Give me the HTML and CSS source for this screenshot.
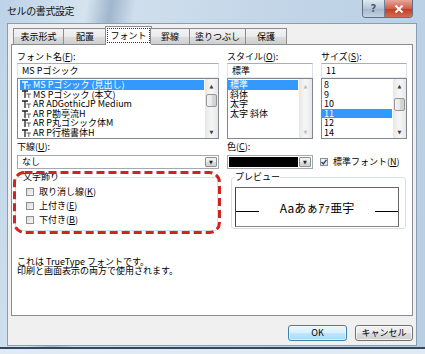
FILE: index.html
```html
<!DOCTYPE html>
<html lang="ja">
  <head>
    <meta charset="utf-8" />
    <title>セルの書式設定</title>
    <link rel="stylesheet" href="styles.css">
  </head>

  <body>
    <div class="window">
      <div class="titlebar">
        <span class="title">セルの書式設定</span>
        <div class="caption-buttons">
          <span class="cap-help">?</span>
          <span class="cap-close">
            <svg width="10" height="8" viewBox="0 0 10 8">
              <path d="M1.5 0.5L8.5 7.5M8.5 0.5L1.5 7.5" stroke="#fff" stroke-width="2" />
            </svg>
          </span>
        </div>
      </div>

      <div class="client">
        <div class="tabs">
          <span class="tab tab-w1">表示形式</span>
          <span class="tab tab-w2">配置</span>
          <span class="tab tab-active"><span class="focus">フォント</span></span>
          <span class="tab tab-w4">罫線</span>
          <span class="tab tab-w5">塗りつぶし</span>
          <span class="tab tab-w6">保護</span>
        </div>

        <div class="panel">
          <div class="font-grid">
            <label class="lbl">フォント名(<u>F</u>):</label>
            <label class="lbl">スタイル(<u>O</u>):</label>
            <label class="lbl">サイズ(<u>S</u>):</label>

            <div class="textbox">MS Pゴシック</div>
            <div class="textbox">標準</div>
            <div class="textbox">11</div>

            <div class="listbox">
              <ul class="items font-items">
                <li class="selected"><svg class="tt" width="10" height="8" viewBox="0 0 10 8"><path d="M0 1h6M3 1v7" stroke="currentColor" stroke-width="1.3" /><path d="M4.5 4h4.5M6.8 4v4" stroke="currentColor" stroke-width="1" opacity="0.7" /></svg>MS Pゴシック (見出し)</li>
                <li><svg class="tt" width="10" height="8" viewBox="0 0 10 8"><path d="M0 1h6M3 1v7" stroke="currentColor" stroke-width="1.3" /><path d="M4.5 4h4.5M6.8 4v4" stroke="currentColor" stroke-width="1" opacity="0.7" /></svg>MS Pゴシック (本文)</li>
                <li><svg class="tt" width="10" height="8" viewBox="0 0 10 8"><path d="M0 1h6M3 1v7" stroke="currentColor" stroke-width="1.3" /><path d="M4.5 4h4.5M6.8 4v4" stroke="currentColor" stroke-width="1" opacity="0.7" /></svg>AR ADGothicJP Medium</li>
                <li><svg class="tt" width="10" height="8" viewBox="0 0 10 8"><path d="M0 1h6M3 1v7" stroke="currentColor" stroke-width="1.3" /><path d="M4.5 4h4.5M6.8 4v4" stroke="currentColor" stroke-width="1" opacity="0.7" /></svg>AR P勘亭流H</li>
                <li><svg class="tt" width="10" height="8" viewBox="0 0 10 8"><path d="M0 1h6M3 1v7" stroke="currentColor" stroke-width="1.3" /><path d="M4.5 4h4.5M6.8 4v4" stroke="currentColor" stroke-width="1" opacity="0.7" /></svg>AR P丸ゴシック体M</li>
                <li><svg class="tt" width="10" height="8" viewBox="0 0 10 8"><path d="M0 1h6M3 1v7" stroke="currentColor" stroke-width="1.3" /><path d="M4.5 4h4.5M6.8 4v4" stroke="currentColor" stroke-width="1" opacity="0.7" /></svg>AR P行楷書体H</li>
              </ul>
              <div class="scrollbar">
                <span class="arrow">▲</span>
                <span class="track"><span class="thumb thumb-font"></span></span>
                <span class="arrow">▼</span>
              </div>
            </div>

            <div class="listbox">
              <ul class="items style-items">
                <li class="selected">標準</li>
                <li>斜体</li>
                <li>太字</li>
                <li>太字 斜体</li>
              </ul>
              <div class="scrollbar disabled">
                <span class="arrow">▲</span>
                <span class="track"></span>
                <span class="arrow">▼</span>
              </div>
            </div>

            <div class="listbox">
              <ul class="items size-items">
                <li>8</li>
                <li>9</li>
                <li>10</li>
                <li class="selected">11</li>
                <li>12</li>
                <li>14</li>
              </ul>
              <div class="scrollbar">
                <span class="arrow">▲</span>
                <span class="track"><span class="thumb thumb-size"></span></span>
                <span class="arrow">▼</span>
              </div>
            </div>
          </div>

          <div class="attr-grid">
            <label class="lbl">下線(<u>U</u>):</label>
            <label class="lbl">色(<u>C</u>):</label>
            <span></span>

            <div class="dropdown">
              <span class="dd-text">なし</span>
              <span class="dd-button">▼</span>
            </div>
            <div class="dropdown">
              <span class="swatch"></span>
              <span class="dd-button">▼</span>
            </div>
            <div class="check-row">
              <span class="checkbox checked">
                <svg width="6" height="6" viewBox="0 0 6 6"><path d="M0.5 3L2.3 5L5.5 0.8" fill="none" stroke="#2b3d6b" stroke-width="1.3" /></svg>
              </span>
              <span>標準フォント(<u>N</u>)</span>
            </div>
          </div>

          <div class="groups">
            <div class="highlight">
              <fieldset class="group effects">
                <legend>文字飾り</legend>
                <div class="check-row"><span class="checkbox"></span><span>取り消し線(<u>K</u>)</span></div>
                <div class="check-row"><span class="checkbox"></span><span>上付き(<u>E</u>)</span></div>
                <div class="check-row"><span class="checkbox"></span><span>下付き(<u>B</u>)</span></div>
              </fieldset>
              <svg class="dashes" width="208" height="63" viewBox="0 0 208 63">
                <rect x="1.5" y="1.5" width="205" height="60" rx="10" fill="none" stroke="#cf2420" stroke-width="3" stroke-dasharray="8 4" />
              </svg>
            </div>

            <fieldset class="group preview">
              <legend>プレビュー</legend>
              <div class="preview-box">
                <span class="rule"></span>
                <span class="sample">Aaあぁｱｧ亜宇</span>
                <span class="rule"></span>
              </div>
            </fieldset>
          </div>

          <p class="info">これは TrueType フォントです。<br>印刷と画面表示の両方で使用されます。</p>
        </div>

        <div class="buttons">
          <button class="btn btn-default">OK</button>
          <button class="btn">キャンセル</button>
        </div>
      </div>
    </div>
  </body>
</html>
```

FILE: styles.css
```css
* {
  box-sizing: border-box;
}

body {
  margin: 0;
  background: #ffffff;
  font-family: "Noto Sans CJK JP", "Noto Sans", sans-serif;
  font-size: 9px;
  color: #000000;
}

u {
  text-decoration: underline;
  text-underline-offset: 1px;
}

/* window frame */

.window {
  width: 425px;
  height: 354px;
  display: flex;
  flex-direction: column;
  padding: 0 8px 8px 7px;
  background:
    linear-gradient(to top, #dfeaf4 0, #dfeaf4 5px, #33465c 5px, #33465c 7px, transparent 7px),
    linear-gradient(100deg, #bcd3e6 0, #d5e3ef 18%, #9fb6cc 23%, #cfdeec 28%, #c3d6e8 55%, #b7cee3 100%);
}

.titlebar {
  height: 23px;
  display: flex;
  justify-content: space-between;
  align-items: flex-start;
}

.title {
  padding-top: 5px;
  font-size: 10px;
  line-height: 12px;
  letter-spacing: -0.4px;
  color: #111111;
}

.caption-buttons {
  display: flex;
  margin-right: 4px;
  height: 18px;
  border: 1px solid #5d6f85;
  border-top: 0;
  border-radius: 0 0 4px 4px;
  overflow: hidden;
}

.cap-help {
  width: 22px;
  display: flex;
  align-items: center;
  justify-content: center;
  background: linear-gradient(#dfe8f1, #b5c6d8 50%, #a3b6ca 51%, #c2d2e2);
  border-right: 1px solid #6f8197;
  font-family: "DejaVu Sans", sans-serif;
  font-size: 10px;
  font-weight: bold;
  color: #4b5a6c;
}

.cap-close {
  width: 27px;
  display: flex;
  align-items: center;
  justify-content: center;
  background: linear-gradient(#e8a69a, #d0604b 50%, #c03c25 51%, #d66a4e);
}

.client {
  flex: 1;
  display: flex;
  flex-direction: column;
  padding: 2px 3px 4px 3px;
  background: #f0f0f0;
  border: 1px solid #8b9db2;
}

/* tabs */

.tabs {
  display: flex;
  align-items: flex-end;
  margin-left: 2px;
  position: relative;
  z-index: 1;
}

.tab {
  height: 16px;
  display: flex;
  align-items: center;
  justify-content: center;
  margin-left: -1px;
  border: 1px solid #898c95;
  border-bottom: 0;
  background: linear-gradient(#f2f2f2, #ebebeb 50%, #dddddd 51%, #cfcfcf);
  line-height: 10px;
}

.tab:first-child {
  margin-left: 0;
}

.tab-w1 { width: 51px; }
.tab-w2 { width: 44px; }
.tab-w4 { width: 40px; }
.tab-w5 { width: 57px; }
.tab-w6 { width: 42px; }

.tab-active {
  width: 47px;
  height: 19px;
  margin: 0 -1px -1px -2px;
  background: #ffffff;
  padding-bottom: 2px;
}

.tab-active .focus {
  padding: 2px 2px 1px;
  border: 1px dotted #333333;
}

/* tab page */

.panel {
  height: 272px;
  padding: 7px 6px 0 5px;
  background: #ffffff;
  border: 1px solid #898c95;
}

.lbl {
  display: block;
  height: 10px;
  line-height: 10px;
  white-space: nowrap;
}

.font-grid {
  display: grid;
  grid-template-columns: 202px 86px 86px;
  grid-template-rows: 11px 15px 61px;
  column-gap: 8px;
}

.textbox {
  align-self: end;
  height: 15px;
  padding-left: 4px;
  border: 1px solid #abadb3;
  border-left-color: #e2e3ea;
  border-right-color: #dbdfe6;
  border-bottom-color: #e3e9ef;
  line-height: 13px;
}

.listbox {
  display: flex;
  height: 61px;
  border: 1px solid #828790;
}

.items {
  flex: 1;
  margin: 0;
  padding: 1px 1px 0 0;
  list-style: none;
  overflow: hidden;
}

.items li {
  height: 9.6px;
  line-height: 9.6px;
  white-space: nowrap;
}

.items li.selected {
  background: #3399ff;
  color: #ffffff;
}

.font-items li {
  display: flex;
  align-items: center;
  margin-left: 2px;
  padding-left: 2px;
}

.font-items .tt {
  flex: none;
  margin-right: 1px;
  color: #222222;
}

.font-items li.selected .tt {
  color: #ffffff;
}

.style-items li,
.size-items li {
  padding-left: 2px;
}

.size-items li {
  margin-right: 0;
}

.scrollbar {
  width: 13px;
  display: flex;
  flex-direction: column;
  background: linear-gradient(90deg, #e6e6e6, #f4f4f4 40%, #f4f4f4 60%, #e6e6e6);
}

.scrollbar .arrow {
  height: 13px;
  display: flex;
  align-items: center;
  justify-content: center;
  font-family: "DejaVu Sans", sans-serif;
  font-size: 5px;
  color: #3c3c3c;
}

.scrollbar.disabled .arrow {
  color: #bfbfbf;
}

.scrollbar .track {
  flex: 1;
  display: flex;
  flex-direction: column;
}

.thumb {
  display: block;
  height: 13px;
  margin: 0 1px;
  border: 1px solid #979797;
  border-radius: 2px;
  background: linear-gradient(90deg, #f3f3f3, #e8e8e8 50%, #d9d9d9 51%, #cfcfcf);
}

.thumb-font {
  margin-top: 2px;
}

.thumb-size {
  margin-top: 6px;
}

/* underline / colour row */

.attr-grid {
  display: grid;
  grid-template-columns: 202px 86px 86px;
  grid-template-rows: 12px 15px;
  column-gap: 8px;
  margin-top: 3px;
}

.dropdown {
  align-self: end;
  height: 14px;
  display: flex;
  align-items: stretch;
  padding: 1px;
  border: 1px solid #a4a8b0;
  background: #ffffff;
}

.dd-text {
  flex: 1;
  padding-left: 3px;
  line-height: 10px;
}

.swatch {
  flex: 1;
  margin-right: 1px;
  background: #000000;
}

.dd-button {
  width: 12px;
  display: flex;
  align-items: center;
  justify-content: center;
  border: 1px solid #8e8f8f;
  border-radius: 1px;
  background: linear-gradient(#f2f2f2, #ebebeb 50%, #dddddd 51%, #cfcfcf);
  font-family: "DejaVu Sans", sans-serif;
  font-size: 5px;
  color: #222222;
}

.check-row {
  display: flex;
  align-items: center;
  gap: 5px;
  height: 14px;
  line-height: 10px;
  white-space: nowrap;
}

.attr-grid .check-row {
  align-self: end;
  margin-left: -1px;
}

.checkbox {
  width: 8px;
  height: 8px;
  flex: none;
  display: flex;
  align-items: center;
  justify-content: center;
  border: 1px solid #8f8f8f;
  background: linear-gradient(135deg, #dcdcdc, #f6f6f6);
}

.checkbox.checked {
  background: linear-gradient(135deg, #f1f4fa, #dce4f0);
}

/* groups */

.groups {
  display: flex;
  align-items: flex-start;
  margin-top: 3px;
}

.highlight {
  position: relative;
  margin-left: -2px;
}

.dashes {
  position: absolute;
  left: -2px;
  top: -1px;
}

.group {
  margin: 0;
  border: 1px solid #d5dfe5;
  border-radius: 3px;
}

.group legend {
  padding: 0 1px;
  line-height: 10px;
}

.effects {
  width: 203px;
  height: 59px;
  padding: 3px 6px 0 6px;
}

.effects .check-row {
  margin-left: 4px;
}

.preview {
  width: 176px;
  height: 57px;
  margin-left: 13px;
  padding: 0 6px 1px 3px;
}

.preview legend {
  padding: 0;
}

.preview-box {
  height: 40px;
  margin-top: 5px;
  display: grid;
  grid-template-columns: 23px 1fr 23px;
  align-items: end;
  padding-bottom: 12px;
  border: 1px solid #666666;
  border-left-color: #444444;
  border-bottom-color: #888888;
}

.rule {
  height: 1px;
  margin-bottom: 2px;
  background: #000000;
}

.sample {
  text-align: center;
  font-size: 12px;
  line-height: 12px;
}

.info {
  margin: 26px 0 0;
  line-height: 9px;
  white-space: nowrap;
}

/* dialog buttons */

.buttons {
  display: flex;
  justify-content: flex-end;
  gap: 8px;
  margin-top: 9px;
}

.btn {
  width: 58px;
  height: 16px;
  padding: 0;
  border: 1px solid #707070;
  border-radius: 3px;
  background: linear-gradient(#f2f2f2, #ebebeb 50%, #dddddd 51%, #cfcfcf);
  box-shadow: inset 0 0 0 1px rgba(255, 255, 255, 0.7);
  font-family: "Noto Sans CJK JP", "Noto Sans", sans-serif;
  font-size: 9px;
  line-height: 12px;
  color: #000000;
}

.btn-default {
  width: 59px;
  border-color: #3c7fb1;
  background: linear-gradient(#eaf6fd, #d9f0fc 50%, #bee6fd 51%, #a7d9f5);
  box-shadow: inset 0 0 0 1px rgba(255, 255, 255, 0.6), 0 0 0 0 transparent;
}
```
